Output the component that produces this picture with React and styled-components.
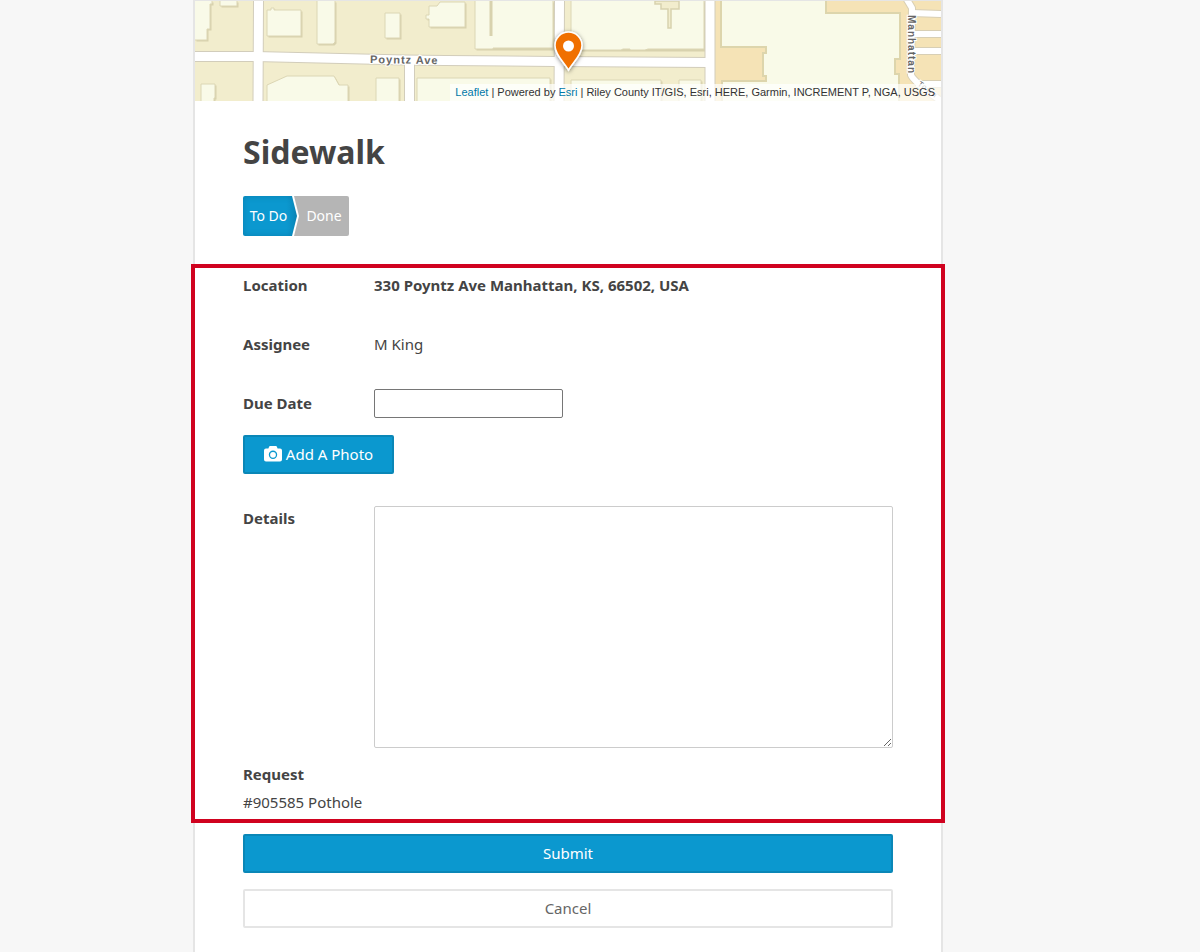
import React from "react";
import styled, { createGlobalStyle, css } from "styled-components";

const GlobalStyle = createGlobalStyle`
  *, *::before, *::after { box-sizing: border-box; }
  body {
    margin: 0;
    background: #f7f7f7;
    color: #444;
    font: 15px/24px "Noto Sans", "Open Sans", sans-serif;
  }
`;

const Page = styled.div`
  min-height: 100vh;
  display: flex;
  justify-content: center;
  padding-right: 64px;
`;

const Card = styled.main`
  width: 100%;
  max-width: 750px;
  background: #fff;
  border: 2px solid #e5e5e5;
  border-width: 1px 2px 0;
`;

const MapFrame = styled.div`
  position: relative;
  height: 100px;
  overflow: hidden;
`;

const MapDrawing = styled.svg`
  display: block;
  width: 100%;
  height: 100%;
`;

const Attribution = styled.div`
  position: absolute;
  right: 0;
  bottom: 0;
  padding: 0 6px 0 5px;
  background: rgba(255, 255, 255, 0.7);
  color: #333;
  font: 11px/17px "Liberation Sans", Arial, sans-serif;
  white-space: nowrap;
`;

const AttributionLink = styled.a`
  color: #0078a8;
  text-decoration: none;
`;

const Header = styled.header`
  padding: 28px 48px;
`;

const Title = styled.h1`
  margin: 0 0 22px;
  font-size: 32px;
  line-height: 45px;
  font-weight: 700;
`;

const Steps = styled.div`
  display: flex;
`;

const Step = styled.button`
  height: 40px;
  border: 0;
  color: #fff;
  font: inherit;
  font-size: 14px;
  ${(p) =>
    p.$active
      ? css`
          width: 54px;
          padding: 0 7px 0 4px;
          border-radius: 2px 0 0 2px;
          background: linear-gradient(90deg, transparent 80%, rgba(0, 60, 90, 0.16)), #0b98cf;
          box-shadow: inset 0 0 6px rgba(0, 60, 90, 0.25);
          clip-path: polygon(0 0, 49px 0, 54px 50%, 49px 100%, 0 100%);
        `
      : css`
          width: 56px;
          margin-left: -4px;
          padding: 0 0 0 6px;
          border-radius: 0 2px 2px 0;
          background: #b5b5b5;
          clip-path: polygon(1px 0, 100% 0, 100% 100%, 1px 100%, 6px 50%);
        `}
`;

const Details = styled.section`
  margin: 0 -4px;
  padding: 3px 48px;
  border: 4px solid #d0021f;
`;

const Row = styled.div`
  display: grid;
  grid-template-columns: 131px 1fr;
  align-items: ${(p) => (p.$top ? "start" : "center")};
  min-height: 29px;
  margin-bottom: ${(p) => p.$gap || 30}px;
`;

const Label = styled.label`
  padding-bottom: 2px;
  font-weight: 700;
`;

const Value = styled.output`
  padding-bottom: 2px;
  font-weight: ${(p) => (p.$strong ? 700 : 400)};
`;

const DateInput = styled.input`
  width: 189px;
  height: 29px;
  padding: 2px 6px;
  border: 1px solid #767676;
  border-radius: 2px;
  font: inherit;
`;

const DetailsInput = styled.textarea`
  display: block;
  width: 100%;
  height: 242px;
  padding: 8px;
  border: 1px solid #ccc;
  border-radius: 2px;
  font: inherit;
  resize: vertical;
`;

const Button = styled.button`
  display: flex;
  align-items: center;
  justify-content: center;
  gap: 4px;
  width: ${(p) => (p.$block ? "100%" : "151px")};
  height: 39px;
  padding: 0 0 2px;
  border: 2px solid ${(p) => (p.$plain ? "#e5e5e5" : "#0a87b7")};
  border-radius: 2px;
  background: ${(p) => (p.$plain ? "#fff" : "#0b98cf")};
  color: ${(p) => (p.$plain ? "#666" : "#fff")};
  font: inherit;
`;

const PhotoRow = styled.div`
  margin-bottom: 32px;
`;

const Request = styled.div`
  display: flex;
  flex-direction: column;
  gap: 2px;
`;

const Actions = styled.footer`
  display: flex;
  flex-direction: column;
  gap: 16px;
  padding: 11px 48px 24px;
`;

const block = { fill: "#f9fae8", stroke: "#dcd6b4", strokeWidth: 1 };

function StreetMap() {
  return (
    <MapDrawing viewBox="0 0 746 100" preserveAspectRatio="xMidYMid slice" role="img" aria-label="Map of Poyntz Ave">
      <rect width="746" height="100" fill="#f2edcd" />
      <rect x="515" width="231" height="100" fill="#f5e3b6" />
      <g fill="#d8d2ae" transform="translate(1.5 1.5)">
        <path d="M0 0H17V3H15V28H12V39H0ZM25 0H42V5H25ZM72 9H76V7H79V9H106V35H72ZM122 0H140V41L138 43H122ZM190 12H205V37H190ZM6 83H20V97H19V100H6ZM72 84L92 75H139L144 84H153V100H72ZM181 77H204V100H181ZM222 77H355V100H222ZM234 5H242L245 1H270V26H234V18H231V14H234ZM280 0H358V48H280ZM376 0H509V49H376ZM376 79H466V100H376ZM484 79H506V100H484Z" />
      </g>
      <g {...block}>
        <path d="M-2 -2H17V3H15V28H12V39H-2Z" />
        <path d="M25 -2V5H42V-2Z" />
        <path d="M72 9H76V7H79V9H106V35H72Z" />
        <path d="M122 -2V43H138L140 41V-2Z" />
        <path d="M190 12H205V37H190Z" />
        <path d="M6 102V83H20V97H19V102Z" />
        <path d="M72 102V84L92 75H139L144 84H153V102Z" />
        <path d="M181 102V77H204V102Z" />
        <path d="M222 102V77H355V102Z" />
        <path d="M234 5H242L245 1H270V26H234V18H231V14H234Z" />
        <path d="M280 -2V48H298V47H358V-2Z" />
        <path d="M376 -2V49H426L428 48H435V49H450L453 48H509V-2Z" />
        <path d="M376 102V79H466V102ZM484 102V79H506V102Z" />
        <path d="M526 -2H631V12H705V58H700V73H704V102H527V80H571V75H568V52H571V46H526Z" stroke="#ddd5ac" strokeWidth="2" />
      </g>
      <path d="M296 0V35" stroke="#d8d2ae" strokeWidth="3" />
      <path d="M460 0V3H466V8H473V27H476V8H484V0Z" fill="#f2edcd" stroke="#d8d2ae" strokeWidth="1.5" />
      <path d="M0 55.5H60L210 59L250 59.500L360 60.500L515 61.500" fill="none" stroke="#d2cdbb" strokeWidth="11" />
      <path d="M63.500 0L63 100M214.500 60V100M364.500 0L364 100M515 0V100" stroke="#d2cdbb" strokeWidth="11" />
      <path d="M0 55.500H60L210 59L250 59.500L360 60.500L515 61.500" fill="none" stroke="#fff" strokeWidth="9" />
      <path d="M63.500 0L63 100M214.500 60V100M364.500 0L364 100M515 0V100" stroke="#fff" strokeWidth="9" />
      <g fill="none" strokeLinejoin="round">
        <path d="M711 -3L717 7L716 74Q718 80 746 100M717 12L746 13M717 33H746M717 50H746M721 83H746" stroke="#d8cfb5" strokeWidth="8" />
        <path d="M711 -3L717 7L716 74Q718 80 746 100" stroke="#fff" strokeWidth="6" />
        <path d="M717 12L746 13M717 33H746M717 50H746M721 83H746" stroke="#fff" strokeWidth="6" />
      </g>
      <g fill="#666" stroke="#fff" strokeWidth="2" paintOrder="stroke" fontFamily="Liberation Sans, sans-serif" fontWeight="700" fontSize="11" letterSpacing="1">
        <text x="175" y="62" transform="rotate(1 175 62)">Poyntz Ave</text>
        <text transform="translate(713 14) rotate(90)" fontSize="10">Manhattan</text>
        <text transform="translate(722 84) rotate(36)" fontSize="8" fontWeight="400">Town</text>
      </g>
      <filter id="pinShadow" x="-50%" y="-50%" width="200%" height="200%">
        <feDropShadow dx="0" dy="1" stdDeviation="2" floodOpacity="0.5" />
      </filter>
      <path
        d="M373.500 69C368 60 360 53.500 360 44.500A13.500 13.500 0 0 1 387 44.500C387 53.500 379 60 373.500 69Z"
        fill="#f07000"
        stroke="#fff"
        strokeWidth="1.500"
        filter="url(#pinShadow)"
      />
      <circle cx="373.500" cy="45" r="5.500" fill="#fff" />
    </MapDrawing>
  );
}

function CameraIcon() {
  return (
    <svg width="18" height="16" viewBox="0 0 18 16" aria-hidden="true">
      <path
        fill="#fff"
        fillRule="evenodd"
        d="M6 0H12Q12.600 0 12.900 .7L13.600 2.500H16Q18 2.500 18 4.500V13.500Q18 15.500 16 15.500H2Q0 15.500 0 13.500V4.500Q0 2.500 2 2.500H4.400L5.100 .7Q5.400 0 6 0ZM9 4.600A4.200 4.200 0 1 0 9 13A4.200 4.200 0 1 0 9 4.600ZM9 5.900A2.900 2.900 0 1 1 9 11.700A2.900 2.900 0 1 1 9 5.900Z"
      />
    </svg>
  );
}

export default function App() {
  return (
    <Page>
      <GlobalStyle />
      <Card>
        <MapFrame>
          <StreetMap />
          <Attribution>
            <AttributionLink href="#leaflet">Leaflet</AttributionLink> | Powered by{" "}
            <AttributionLink href="#esri">Esri</AttributionLink> | Riley County IT/GIS, Esri, HERE, Garmin, INCREMENT P,
            NGA, USGS
          </Attribution>
        </MapFrame>
        <Header>
          <Title>Sidewalk</Title>
          <Steps>
            <Step type="button" $active aria-pressed="true">To Do</Step>
            <Step type="button" aria-pressed="false">Done</Step>
          </Steps>
        </Header>
        <Details>
          <Row>
            <Label htmlFor="location">Location</Label>
            <Value id="location" $strong>330 Poyntz Ave Manhattan, KS, 66502, USA</Value>
          </Row>
          <Row>
            <Label htmlFor="assignee">Assignee</Label>
            <Value id="assignee">M King</Value>
          </Row>
          <Row $gap={17}>
            <Label htmlFor="due">Due Date</Label>
            <DateInput id="due" type="text" />
          </Row>
          <PhotoRow>
            <Button type="button">
              <CameraIcon />
              Add A Photo
            </Button>
          </PhotoRow>
          <Row $top $gap={14}>
            <Label htmlFor="details">Details</Label>
            <DetailsInput id="details" />
          </Row>
          <Request>
            <Label htmlFor="request">Request</Label>
            <Value id="request">#905585 Pothole</Value>
          </Request>
        </Details>
        <Actions>
          <Button type="submit" $block>Submit</Button>
          <Button type="button" $block $plain>Cancel</Button>
        </Actions>
      </Card>
    </Page>
  );
}
